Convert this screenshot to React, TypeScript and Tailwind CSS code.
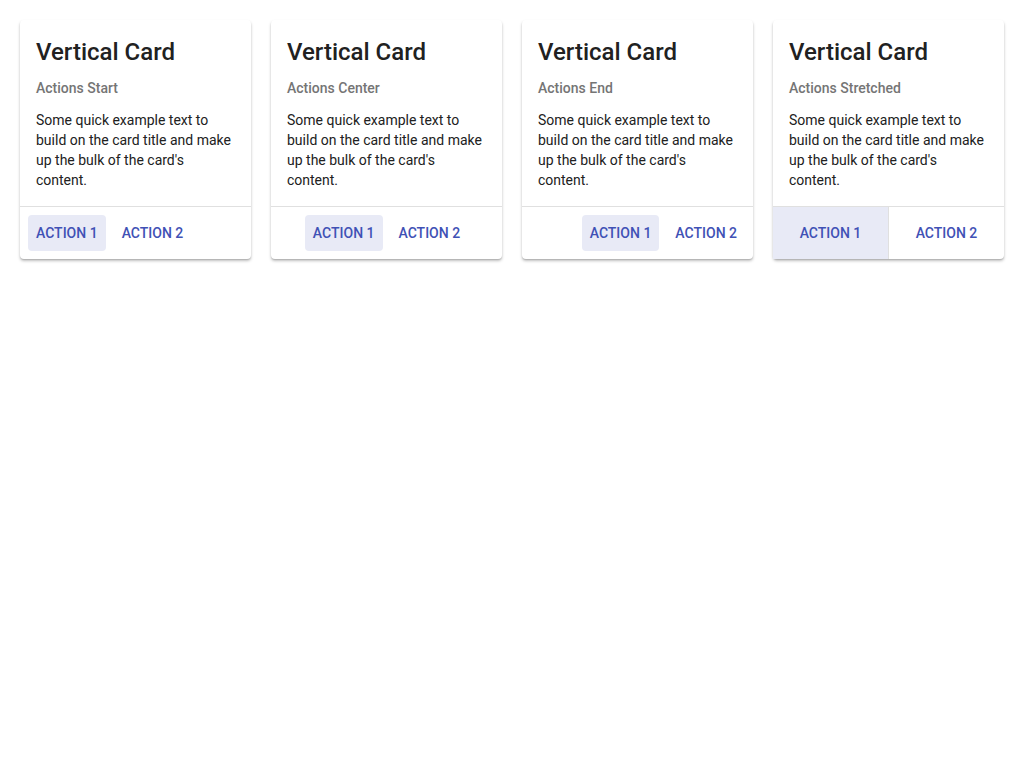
type Align = "start" | "center" | "end" | "stretch";

const cards: { subtitle: string; align: Align }[] = [
  { subtitle: "Actions Start", align: "start" },
  { subtitle: "Actions Center", align: "center" },
  { subtitle: "Actions End", align: "end" },
  { subtitle: "Actions Stretched", align: "stretch" },
];

function Footer({ align }: { align: Align }) {
  if (align === "stretch") {
    return (
      <div className="flex h-[53px] border-t border-[#e0e0e0]">
        <button className="flex-1 bg-[#e8eaf6] text-[14px] font-medium uppercase text-[#3f51b5]">
          Action 1
        </button>
        <button className="flex-1 border-l border-[#e0e0e0] text-[14px] font-medium uppercase text-[#3f51b5]">
          Action 2
        </button>
      </div>
    );
  }

  const justify =
    align === "start" ? "justify-start" : align === "center" ? "justify-center" : "justify-end";

  return (
    <div className={`flex ${justify} gap-2 border-t border-[#e0e0e0] p-2`}>
      <button className="h-9 rounded px-2 bg-[#e8eaf6] text-[14px] font-medium uppercase text-[#3f51b5]">
        Action 1
      </button>
      <button className="h-9 rounded px-2 text-[14px] font-medium uppercase text-[#3f51b5]">
        Action 2
      </button>
    </div>
  );
}

export default function App() {
  return (
    <div className="min-h-screen bg-white p-5 font-['Roboto',sans-serif]">
      <div className="grid grid-cols-4 gap-5">
        {cards.map((card) => (
          <div
            key={card.subtitle}
            className="flex flex-col rounded-sm bg-white shadow-[0_2px_3px_rgba(0,0,0,0.25),0_1px_1px_rgba(0,0,0,0.1)]"
          >
            <div className="px-4 pt-4 pb-4">
              <h2 className="text-[24px] leading-8 font-medium text-[#212121]">Vertical Card</h2>
              <div className="mt-2.5 text-[14px] leading-5 font-medium text-[#757575]">
                {card.subtitle}
              </div>
              <p className="mt-3 text-[14px] leading-5 text-[#212121]">
                Some quick example text to build on the card title and make up the bulk of the
                card's content.
              </p>
            </div>
            <Footer align={card.align} />
          </div>
        ))}
      </div>
    </div>
  );
}
